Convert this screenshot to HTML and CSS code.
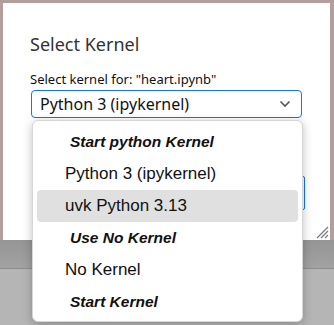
FILE: index.html
```html
<!DOCTYPE html>
<html lang="en">
<head>
    <meta charset="UTF-8">
    <title>Select Kernel</title>
    <link rel="stylesheet" href="styles.css">
</head>
<body>
    <div class="backdrop">
        <div class="dialog">
            <h2 class="title">Select Kernel</h2>
            <label class="label">Select kernel for: "heart.ipynb"</label>
            <div class="select">
                <span>Python 3 (ipykernel)</span>
                <svg class="chevron" width="12" height="8" viewBox="0 0 12 8">
                    <path d="M1.5 1.5 L6 6 L10.5 1.5" fill="none" stroke="#555" stroke-width="1.6"/>
                </svg>
            </div>
            <div class="actions">
                <button class="ok-btn">Select</button>
            </div>
            <svg class="grip" width="14" height="14" viewBox="0 0 14 14">
                <path d="M13 2 L2 13 M13 6 L6 13 M13 10 L10 13" stroke="#777" stroke-width="1.2"/>
            </svg>
        </div>
    </div>
    <div class="below">
        <div class="band"></div>
    </div>

    <div class="popup">
        <div class="group">Start python Kernel</div>
        <div class="option">Python 3 (ipykernel)</div>
        <div class="option active">uvk Python 3.13</div>
        <div class="group">Use No Kernel</div>
        <div class="option">No Kernel</div>
        <div class="group">Start Kernel</div>
    </div>
</body>
</html>
```

FILE: styles.css
```css
body {
    margin: 0;
    padding: 0;
    width: 334px;
    height: 325px;
    overflow: hidden;
    font-family: "Noto Sans", sans-serif;
    position: relative;
}
.backdrop {
    background-color: #b39d9d;
    padding: 3px 4px 0 3px;
}
.dialog {
    background-color: #fff;
    height: 237px;
    padding: 0 0 0 27px;
    box-sizing: border-box;
    position: relative;
}
.title {
    margin: 0;
    padding-top: 28px;
    font-size: 18px;
    font-weight: normal;
    color: #333;
    line-height: 26px;
}
.label {
    display: block;
    margin-top: 14px;
    font-size: 13px;
    color: #111;
    line-height: 16px;
}
.select {
    margin-top: 3px;
    margin-left: 1px;
    width: 271px;
    height: 28px;
    box-sizing: border-box;
    border: 1px solid #1a73e8;
    border-radius: 4px;
    display: flex;
    align-items: center;
    justify-content: space-between;
    padding: 0 10px 0 8px;
    font-size: 16px;
    color: #111;
}
.chevron {
    display: block;
}
.actions {
    margin-top: 58px;
    display: flex;
    justify-content: flex-end;
    padding-right: 25px;
}
.ok-btn {
    height: 34px;
    width: 80px;
    border: 1px solid #1a73e8;
    border-radius: 2px;
    background-color: #fff;
}
.grip {
    position: absolute;
    right: 1px;
    bottom: 1px;
}
.below {
    height: 85px;
    background-color: #b5b5b5;
}
.band {
    height: 28px;
    background: linear-gradient(#959595, #a2a2a2);
    border-bottom: 1px solid #8c8c8c;
}
.popup {
    position: absolute;
    left: 32px;
    top: 120px;
    width: 271px;
    height: 202px;
    box-sizing: border-box;
    background-color: #fff;
    border: 1px solid #d6d6d6;
    border-radius: 6px;
    box-shadow: 0 2px 10px rgba(0, 0, 0, 0.25);
    padding: 5px 4px 0 4px;
    font-family: "Liberation Sans", Arial, sans-serif;
    font-size: 17px;
    color: #111;
}
.group {
    height: 32px;
    line-height: 32px;
    font-size: 15.5px;
    font-weight: bold;
    font-style: italic;
    padding-left: 33px;
}
.option {
    height: 32px;
    line-height: 32px;
    padding-left: 28px;
    border-radius: 4px;
}
.option.active {
    background-color: #e0e0e0;
}
```
